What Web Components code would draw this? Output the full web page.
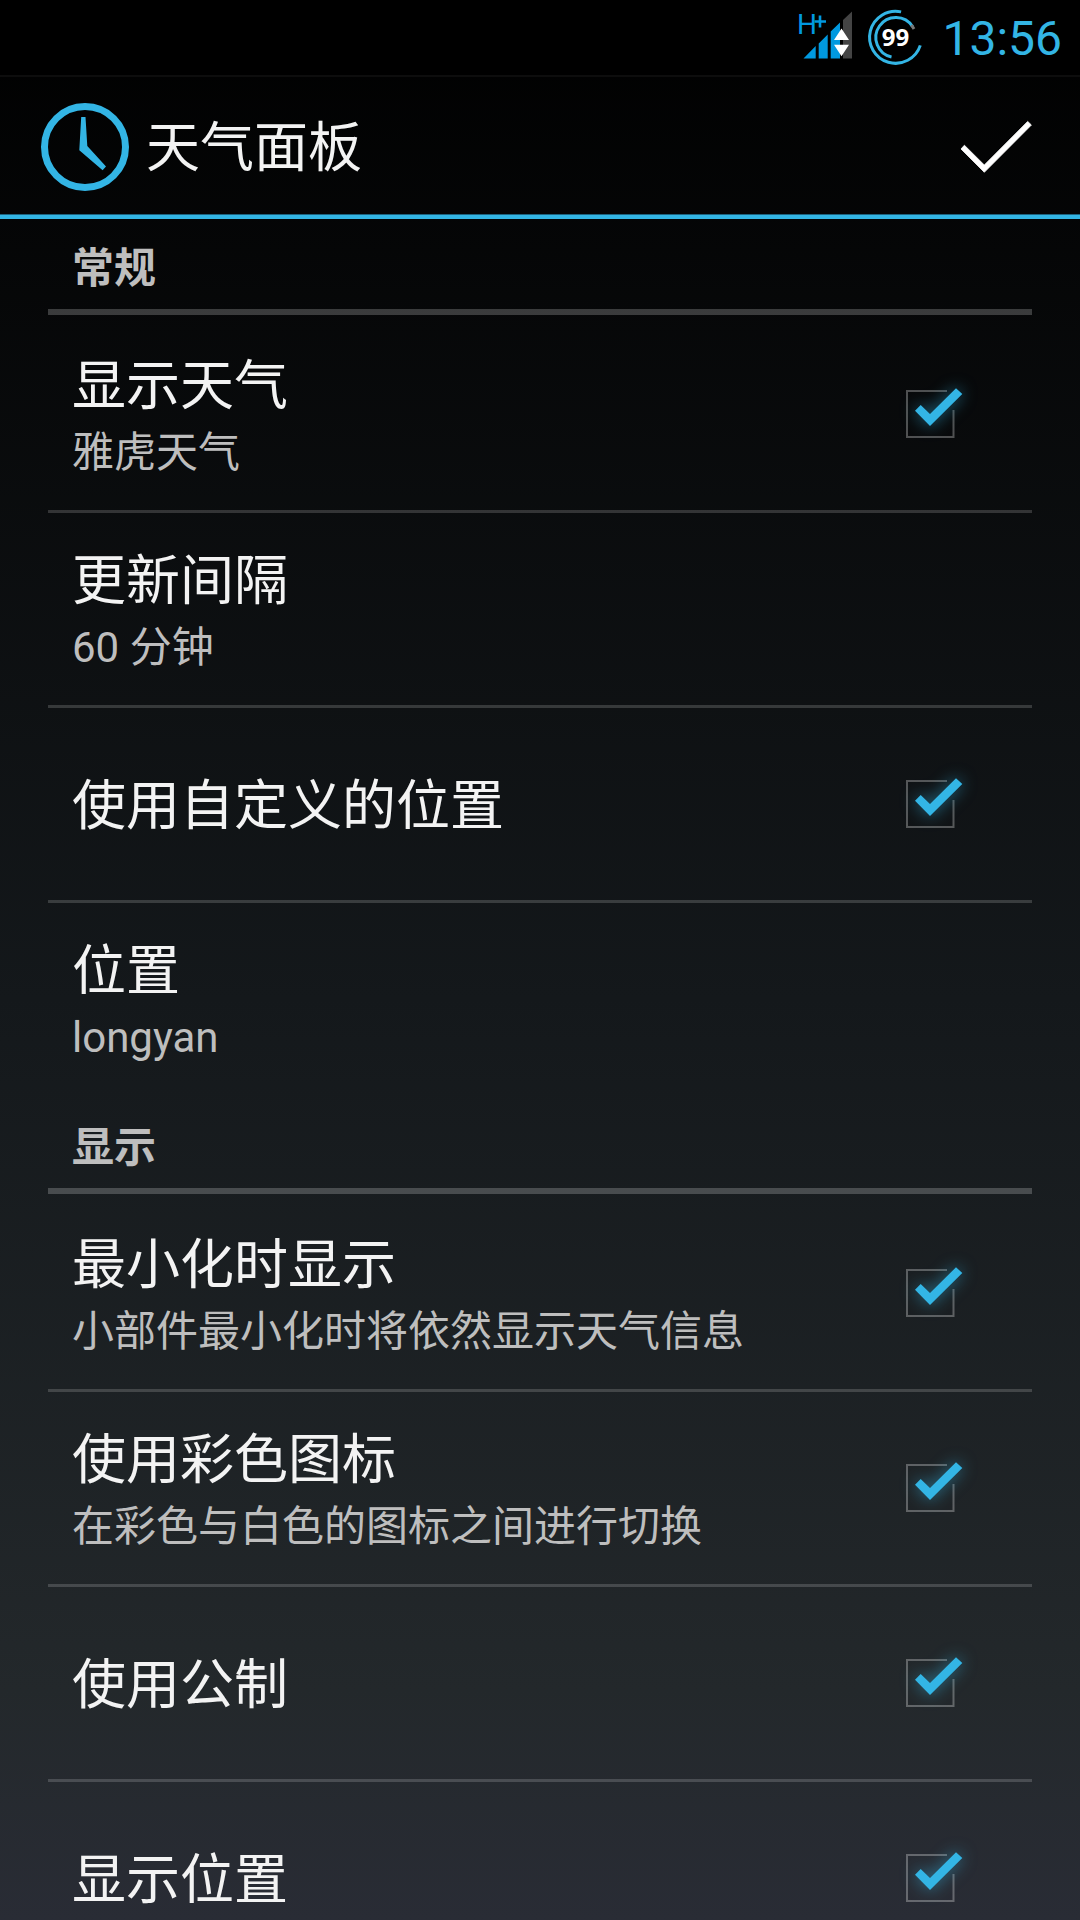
<!DOCTYPE html>
<html lang="zh-CN">
<head>
<meta charset="utf-8">
<meta name="viewport" content="width=device-width, initial-scale=1">
<title>天气面板</title>
<style>
  :root {
    --accent: #33b5e5;
    --text: #f3f3f3;
    --text-dim: #bebebe;
  }
  html, body { margin: 0; height: 100%; background: #000; }
  body { font-family: Roboto, "Noto Sans CJK SC", sans-serif; color: var(--text); }
</style>
</head>
<body>
<settings-screen>
  <status-bar slot="status" time="13:56" battery="99"></status-bar>
  <action-bar slot="bar">天气面板</action-bar>

  <pref-section>
    <span slot="heading">常规</span>
    <pref-row checkable>显示天气<span slot="summary">雅虎天气</span></pref-row>
    <pref-row>更新间隔<span slot="summary">60 分钟</span></pref-row>
    <pref-row checkable>使用自定义的位置</pref-row>
    <pref-row>位置<span slot="summary">longyan</span></pref-row>
  </pref-section>

  <pref-section>
    <span slot="heading">显示</span>
    <pref-row checkable>最小化时显示<span slot="summary">小部件最小化时将依然显示天气信息</span></pref-row>
    <pref-row checkable>使用彩色图标<span slot="summary">在彩色与白色的图标之间进行切换</span></pref-row>
    <pref-row checkable>使用公制</pref-row>
    <pref-row checkable>显示位置</pref-row>
  </pref-section>
</settings-screen>

<script>
  const define = (name, render) => customElements.define(name, class extends HTMLElement {
    constructor() {
      super();
      this.attachShadow({ mode: 'open' });
    }
    connectedCallback() {
      if (!this.shadowRoot.firstChild) this.shadowRoot.innerHTML = render(this);
    }
  });

  define('settings-screen', () => `
    <style>
      :host {
        display: flex; flex-direction: column; height: 100vh;
        background: linear-gradient(#000, #14181b 52%, #23282b 88%, #292c35);
      }
      main {
        flex: 1; min-height: 0; overflow-y: auto; scrollbar-width: none;
        padding: 0 48px;
      }
    </style>
    <slot name="status"></slot>
    <slot name="bar"></slot>
    <main><slot></slot></main>`);

  define('status-bar', el => `
    <style>
      :host {
        display: flex; align-items: center; justify-content: flex-end;
        height: 75px; padding: 0 18px; background: #000; color: var(--accent);
      }
      svg { display: block; flex: none; }
      .signal { margin-right: 12px; }
      .battery { margin-right: 18px; }
      time { font-size: 48px; line-height: 72px; padding-top: 3px; }
    </style>
    <svg class="signal" width="56" height="75" viewBox="798 0 56 75" role="img" aria-label="H+">
      <text x="797" y="34" font-family="'Liberation Sans Narrow', Roboto, sans-serif" font-size="28" fill="#0099e0">H</text>
      <path d="M820 15.500V27.500M814.500 21.500H826" stroke="#0099e0" stroke-width="2.600"/>
      <path fill="#0099e0" d="M803.500 58.500L815.700 46V58.500ZM818.700 43.500L827.700 34.500V58.500H818.700ZM830.700 31.500L840 22.500V58.500H830.700Z"/>
      <path fill="#444" d="M843 20L852 11.500V58.500H843Z"/>
      <path fill="#fff" d="M834 40L841.500 28.500L849 40ZM834 44.700H849L841.500 56.200Z"/>
    </svg>
    <svg class="battery" width="58" height="75" viewBox="866 0 58 75">
      <g fill="none" stroke="#33b5e5" stroke-width="3">
        <path d="M901.100 11.900A26 26 0 1 0 920.300 45.400"/>
        <path d="M912.700 26.700A20 20 0 1 0 891.500 57"/>
        <path d="M911.500 25L914 29" stroke="#777"/>
      </g>
      <text x="895.500" y="46" text-anchor="middle" font-family="'Noto Sans', sans-serif" font-weight="700" font-size="24" fill="#fff">${el.getAttribute('battery')}</text>
    </svg>
    <time>${el.getAttribute('time')}</time>`);

  define('action-bar', () => `
    <style>
      :host {
        display: flex; align-items: center; height: 144px; padding: 0 36px;
        box-shadow: inset 0 2px #0d0d0d, inset 0 -4px var(--accent), inset 0 -5px #1d6480;
      }
      h1 { flex: 1; margin: 0; padding: 4px 0 0 12px; font-size: 54px; line-height: 72px; font-weight: 400; }
      button { border: 0; padding: 0; background: none; cursor: pointer; }
      svg { display: block; }
    </style>
    <svg width="98" height="98" viewBox="36 98 98 98" aria-hidden="true">
      <circle cx="85" cy="147" r="40.500" fill="none" stroke="#33b5e5" stroke-width="7"/>
      <path fill="#33b5e5" d="M81.200 117H85.500L87.300 146L106 166.500L102.600 170.300L79.300 150.300Z"/>
    </svg>
    <h1><slot></slot></h1>
    <button type="button" aria-label="完成">
      <svg width="96" height="96" viewBox="948 99 96 96">
        <path fill="#fff" stroke="#fff" stroke-width=".8" d="M961 149L964.400 145.200L984.300 165L1027.700 121.400L1031.400 125L984.300 172.300Z"/>
      </svg>
    </button>`);

  define('pref-section', () => `
    <style>
      :host { display: block; padding-bottom: 3px; }
      h2 {
        box-sizing: border-box; height: 96px; margin: 0 0 3px; padding: 0 24px;
        border-bottom: 6px solid rgba(255, 255, 255, .21);
        font-size: 42px; line-height: 100px; font-weight: 700; color: var(--text-dim);
      }
      .rows { display: flex; flex-direction: column; gap: 3px; }
      ::slotted(pref-row:not(:last-child)) { box-shadow: 0 3px rgba(255, 255, 255, .17); }
    </style>
    <h2><slot name="heading"></slot></h2>
    <div class="rows"><slot></slot></div>`);

  define('pref-row', el => {
    const checkable = el.hasAttribute('checkable');
    const tag = checkable ? 'label' : 'button';
    const summary = el.querySelector('[slot=summary]')
      ? '<span class="summary"><slot name="summary"></slot></span>' : '';
    return `
    <style>
      :host { display: block; }
      .row {
        box-sizing: border-box; display: flex; align-items: center;
        width: 100%; height: 192px; padding: 0 54px 0 24px;
        border: 0; background: none; color: inherit; font: inherit; text-align: left; cursor: pointer;
      }
      .texts { flex: 1; display: flex; flex-direction: column; padding-top: 6px; }
      .title { font-size: 54px; line-height: 72px; }
      .summary { font-size: 42px; line-height: 60px; color: var(--text-dim); }
      .check { display: grid; flex: none; }
      .check > * { grid-area: 1 / 1; width: 96px; height: 96px; margin: 0; }
      input { appearance: none; cursor: pointer; }
      svg { display: block; pointer-events: none; }
      .tick { visibility: hidden; filter: drop-shadow(0 0 8px rgba(51, 181, 229, .6)); }
      input:checked + svg .tick { visibility: visible; }
    </style>
    <${tag} class="row"${checkable ? '' : ' type="button"'}>
      <span class="texts">
        <span class="title"><slot></slot></span>
        ${summary}
      </span>
      ${checkable ? `<span class="check">
        <input type="checkbox" checked>
        <svg viewBox="882 366 96 96" aria-hidden="true">
          <path fill="none" stroke="#fff" stroke-opacity=".29" stroke-width="2" d="M947 391H907V437H953.500V410"/>
          <path class="tick" fill="#33b5e5" d="M915 410.700L920.700 405L930 414L956 388.300L962.300 394L930 426Z"/>
        </svg>
      </span>` : ''}
    </${tag}>`;
  });
</script>
</body>
</html>
